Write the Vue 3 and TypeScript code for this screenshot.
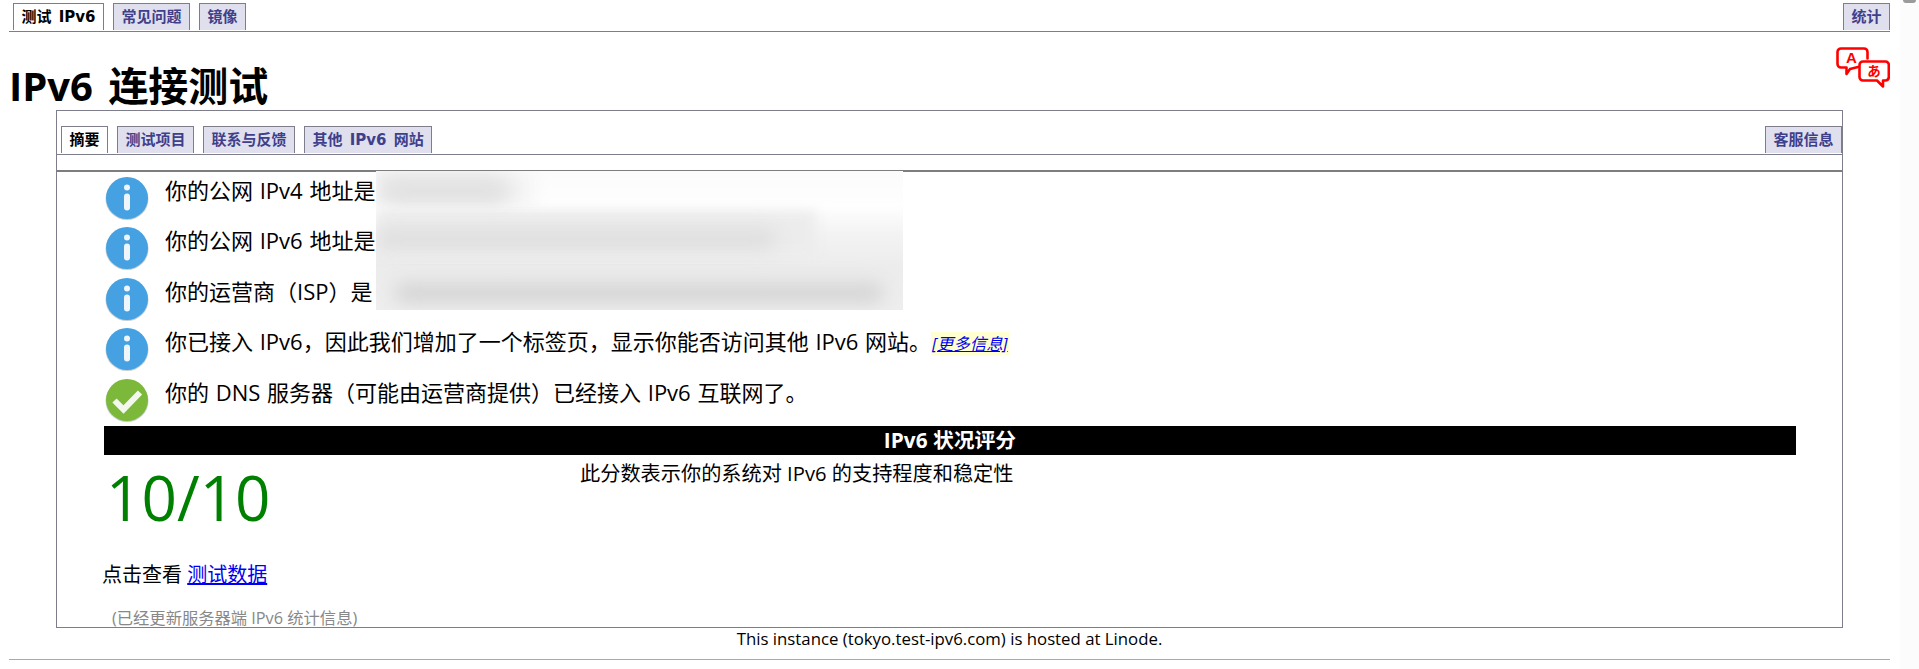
<script setup lang="ts">
interface Tab { label: string; active?: boolean }
interface Row { kind: 'info' | 'ok'; text: string; more?: boolean }

const topTabs: Tab[] = [
  { label: '测试 IPv6', active: true },
  { label: '常见问题' },
  { label: '镜像' },
]
const innerTabs: Tab[] = [
  { label: '摘要', active: true },
  { label: '测试项目' },
  { label: '联系与反馈' },
  { label: '其他 IPv6 网站' },
]
const rows: Row[] = [
  { kind: 'info', text: '你的公网 IPv4 地址是' },
  { kind: 'info', text: '你的公网 IPv6 地址是' },
  { kind: 'info', text: '你的运营商（ISP）是' },
  { kind: 'info', text: '你已接入 IPv6，因此我们增加了一个标签页，显示你能否访问其他 IPv6 网站。', more: true },
  { kind: 'ok', text: '你的 DNS 服务器（可能由运营商提供）已经接入 IPv6 互联网了。' },
]
</script>

<template>
  <div class="page">
    <nav class="tabbar top">
      <a v-for="t in topTabs" :key="t.label" class="tab" :class="{ active: t.active }">{{ t.label }}</a>
      <a class="tab push">统计</a>
    </nav>

    <header class="head">
      <h1>IPv6 连接测试</h1>
      <svg class="translate" width="54" height="41" viewBox="0 0 54 41" aria-label="language">
        <path d="M5 1.5h23a3.5 3.5 0 0 1 3.5 3.500v6.500M22 20l-8 2-3.500 5v-6.500H5A3.500 3.500 0 0 1 1.500 17V5A3.500 3.500 0 0 1 5 1.500" fill="none" stroke="#f00" stroke-width="2.600" stroke-linejoin="round" stroke-linecap="round" />
        <path d="M27 14.500h22.500A3.300 3.300 0 0 1 52.800 18v12a3.500 3.500 0 0 1-3.300 3.500h-2.500v6l-6-6H27a3.500 3.500 0 0 1-3.500-3.500V18a3.500 3.500 0 0 1 3.500-3.500z" fill="#fff" stroke="#f00" stroke-width="2.600" stroke-linejoin="round" />
        <text x="15.500" y="15.500" text-anchor="middle" class="glyph a">A</text>
        <text x="38" y="28.500" text-anchor="middle" class="glyph b">あ</text>
      </svg>
    </header>

    <main class="box">
      <nav class="tabbar inner">
        <a v-for="t in innerTabs" :key="t.label" class="tab" :class="{ active: t.active }">{{ t.label }}</a>
        <a class="tab push">客服信息</a>
      </nav>

      <div class="panel">
        <div class="rows">
          <div v-for="r in rows" :key="r.text" class="row">
            <svg class="status" width="44" height="44" viewBox="0 0 44 44">
              <ellipse cx="22" cy="23" rx="21.500" ry="21" fill="#9aa7ad" opacity=".55" />
              <template v-if="r.kind === 'info'">
                <circle cx="22" cy="22" r="21" fill="#45a1e1" />
                <circle cx="22" cy="11.500" r="3" fill="#eef6fb" />
                <rect x="19" y="17.500" width="6" height="17" rx="3" fill="#eef6fb" />
              </template>
              <template v-else>
                <circle cx="22" cy="22" r="21" fill="#7cb83a" />
                <path d="M9.500 22.500l9 9L35 14.500" fill="none" stroke="#f3f8ee" stroke-width="6" />
              </template>
            </svg>
            <p>{{ r.text }}<a v-if="r.more" class="more">[更多信息]</a></p>
          </div>
          <div class="redacted" aria-hidden="true">
            <i class="patch" />
            <i class="patch second" />
            <i class="smear s1" />
            <i class="smear s2" />
            <i class="smear s3" />
          </div>
        </div>

        <div class="bar">IPv6 状况评分</div>
        <div class="score">
          <div class="num">10/10</div>
          <div class="desc">此分数表示你的系统对 IPv6 的支持程度和稳定性</div>
        </div>
        <p class="link-line">点击查看 <a class="link">测试数据</a></p>
        <p class="updated">(已经更新服务器端 IPv6 统计信息)</p>
      </div>
    </main>

    <footer class="foot">This instance (tokyo.test-ipv6.com) is hosted at Linode.</footer>
  </div>
  <div class="scrollbar" aria-hidden="true"><span /></div>
</template>

<style>
html, body { margin: 0; background: #fff; overflow: hidden; }
</style>

<style scoped>
.page {
  box-sizing: border-box;
  width: 1881px;
  height: 660px;
  margin-left: 9px;
  border-bottom: 1px solid #aaa;
  font: 20px/30px "Open Sans", "Noto Sans CJK SC", sans-serif;
  color: #000;
}
.tabbar {
  display: flex;
  align-items: flex-end;
  gap: 9px;
  height: 28px;
  border-bottom: 1px solid #7d7d8c;
  box-sizing: content-box;
}
.top { padding: 3px 0 0 4px; }
.inner { padding: 15px 0 0 4px; }
.tab {
  box-sizing: border-box;
  height: 27px;
  margin-bottom: 1px;
  padding: 0 7.500px;
  border: 1px solid #7d7d8c;
  border-bottom: 0;
  background: #dfdfee;
  color: #3f3f8c;
  font: bold 15px/26px "DejaVu Sans", "Noto Sans CJK SC", sans-serif;
  word-spacing: 2px;
  white-space: nowrap;
}
.tab.active { background: #fff; color: #000; }
.push { margin-left: auto; }

.head {
  display: flex;
  justify-content: space-between;
  align-items: flex-start;
  height: 78px;
}
h1 {
  margin: 29px 0 0;
  font: bold 40px/50px "Open Sans", "Noto Sans CJK SC", sans-serif;
  word-spacing: 5px;
}
.translate { margin-top: 15px; }
.glyph { fill: #f00; font-family: "Liberation Sans", "Noto Sans CJK JP", sans-serif; font-weight: bold; }
.glyph.a { font-size: 15px; }
.glyph.b { font-size: 13.500px; }

.box {
  box-sizing: border-box;
  width: 1787px;
  height: 518px;
  margin-left: 47px;
  border: 1px solid #7d7d8c;
}
.panel {
  margin-top: 15px;
  border-top: 2px solid #7d7d7d;
  padding-left: 48px;
  height: 340px;
}
.rows { position: relative; padding-top: 4px; height: 254px; box-sizing: border-box; }
.row {
  display: flex;
  gap: 16px;
  height: 50.400px;
}
.row p { margin: -1px 0 0; font-size: 22px; word-spacing: 1px; }
.status { flex: none; }
.more {
  padding: 0 1px;
  background: #ffffd0;
  color: #00e;
  font-size: 16.500px;
  font-style: italic;
  text-decoration: underline;
}
.redacted {
  position: absolute;
  left: 271px;
  top: -1px;
  width: 527px;
  height: 139px;
  overflow: hidden;
  background: linear-gradient(#fbfbfb 0, #fefefe 25%, #f3f3f3 45%, #ececec 70%, #eeeeee 100%);
}
.patch {
  position: absolute;
  left: 0;
  top: 0;
  width: 160px;
  height: 34px;
  background: linear-gradient(90deg, #ececec 70%, #f8f8f8);
  filter: blur(6px);
}
.patch.second { top: 40px; width: 440px; height: 44px; background: #ececec; }
.smear { position: absolute; height: 20px; border-radius: 10px; filter: blur(9px); }
.s1 { left: 8px; top: 10px; width: 125px; background: #e0e0e0; }
.s2 { left: 0; top: 58px; width: 400px; background: #dedede; }
.s3 { left: 18px; top: 112px; width: 490px; background: #d4d4d4; }

.bar {
  width: 1692px;
  height: 29px;
  margin-left: -1px;
  background: #000;
  color: #fff;
  font-size: 20.800px;
  font-weight: bold;
  line-height: 29px;
  text-align: center;
}
.score { display: flex; height: 92px; margin-left: 1px; }
.num {
  width: 474px;
  color: #008000;
  font-size: 62px;
  line-height: 84px;
}
.desc { font-size: 20.200px; line-height: 37px; }
.link-line { margin: 13px 0 0 -3px; line-height: 30px; }
.link { color: #00e; text-decoration: underline; }
.updated {
  margin: 13px 0 0 7px;
  color: #888;
  font-size: 16.300px;
  line-height: 30px;
}
.foot {
  margin-top: -1px;
  height: 31px;
  line-height: 24px;
  font-size: 16.800px;
  text-align: center;
}
.scrollbar {
  position: fixed;
  top: 0;
  right: 0;
  width: 19px;
  height: 669px;
  background: #fcfcfc;
}
.scrollbar span {
  position: absolute;
  left: 3px;
  top: -3px;
  width: 13px;
  height: 6px;
  border-radius: 3px;
  background: #9b9b9b;
}
</style>
